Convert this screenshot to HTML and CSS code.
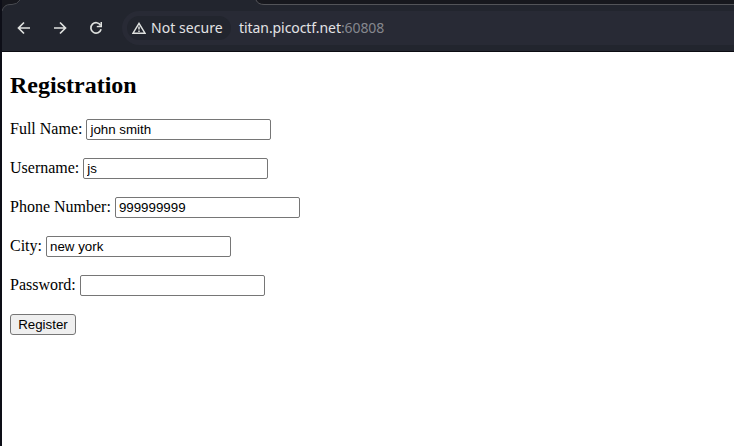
FILE: index.html
```html
<!DOCTYPE html>
<html lang="en">
<head>
<meta charset="utf-8">
<title>Registration</title>
<link rel="stylesheet" href="styles.css">
</head>
<body>
<div class="window">
  <header class="toolbar">
    <svg class="tab-edge" width="732" height="12" viewBox="0 0 732 12" fill="none">
      <path d="M0 0H18Q15 4.500 10 4.500H8Q2 4.500 0 11Z" fill="#17181e"/>
      <path d="M18 0Q15 4.500 10 4.500H8Q2 4.500 0 11" stroke="#484a50"/>
      <path d="M254 0Q256 4.500 262 4.500H732V0Z" fill="#17181e"/>
      <path d="M254 0Q256 4.500 262 4.500H732" stroke="#535459"/>
    </svg>
    <nav class="nav">
      <svg width="14" height="14" viewBox="0 0 14 14"><path d="M13 7H2M7 1.500 1.500 7 7 12.500"/></svg>
      <svg width="14" height="14" viewBox="0 0 14 14"><path d="M1 7H12M7 1.500 12.500 7 7 12.500"/></svg>
      <svg width="14" height="14" viewBox="0 0 14 14"><path d="M11.600 4.300A5.200 5.200 0 1 0 12.100 8.300"/><path class="solid" d="M13 1V6.200H7.800V5L11.500 4.500V1Z"/></svg>
    </nav>
    <div class="address">
      <div class="chip">
        <svg width="14" height="12" viewBox="0 0 14 12"><path d="M7 1.400 13 11.200H1Z" /><path d="M7 4.500V7.500M7 8.500V10"/></svg>
        <span>Not secure</span>
      </div>
      <div class="url">titan.picoctf.net<span class="port">:60808</span></div>
    </div>
  </header>
  <main class="page">
    <h2>Registration</h2>
    <form>
      <div class="row"><label for="name">Full Name:</label> <input id="name" type="text" value="john smith"></div>
      <div class="row"><label for="user">Username:</label> <input id="user" type="text" value="js"></div>
      <div class="row"><label for="phone">Phone Number:</label> <input id="phone" type="text" value="999999999"></div>
      <div class="row"><label for="city">City:</label> <input id="city" type="text" value="new york"></div>
      <div class="row"><label for="pass">Password:</label> <input id="pass" type="password"></div>
      <button type="button">Register</button>
    </form>
  </main>
</div>
</body>
</html>
```
FILE: styles.css
```css
* { box-sizing: border-box; }
body { margin: 0; background: #fff; overflow: hidden; }
.window {
  height: 446px;
  border-left: 2px solid #0d0e17;
}
.toolbar {
  position: relative;
  display: flex;
  height: 52px;
  padding-top: 11px;
  background: #22252e;
  border-bottom: 1px solid #0b0c12;
}
.tab-edge { position: absolute; top: 0; left: 0; }
.nav {
  display: flex;
  gap: 22px;
  width: 120px;
  height: 34px;
  padding-left: 15px;
  align-items: center;
}
.nav svg, .chip svg {
  flex: none;
  fill: none;
  stroke: #dfe1df;
  stroke-width: 1.700;
}
.nav .solid { fill: #dfe1df; stroke: none; }
.chip svg { stroke-width: 1.500; margin-right: 5px; }
.address {
  display: flex;
  flex: 1;
  align-items: center;
  height: 34px;
  padding-left: 5px;
  background: #282a35;
  border-radius: 17px 0 0 17px;
  font-family: "Noto Sans", sans-serif;
  font-size: 14px;
  line-height: 24px;
  color: #e3e3e5;
  white-space: nowrap;
}
.chip {
  display: flex;
  align-items: center;
  width: 104px;
  height: 24px;
  padding-left: 5px;
  margin-right: 8px;
  background: #22252e;
  border-radius: 12px;
}
.chip span { letter-spacing: 0.06px; }
.url { letter-spacing: -0.07px; }
.port { color: #85878e; }
.page {
  padding: 20px 8px 0;
  font: 16px "Liberation Serif", serif;
  color: #000;
}
h2 {
  margin: 0 0 19px;
  font-size: 24px;
  line-height: 27px;
}
.row { height: 21px; margin-bottom: 18px; line-height: 21px; white-space: nowrap; }
input {
  width: 185px;
  height: 21px;
  padding: 2px 3px;
  border: 1px solid #767676;
  border-radius: 2px;
  font: 13.333px "Liberation Sans", sans-serif;
  outline: 0;
  background: #fff;
}
button {
  display: block;
  width: 66px;
  height: 21px;
  margin-top: 19px;
  padding: 0;
  border: 1px solid #767676;
  border-radius: 3px;
  background: #efefef;
  font: 13.333px "Liberation Sans", sans-serif;
  color: #000;
}
```
